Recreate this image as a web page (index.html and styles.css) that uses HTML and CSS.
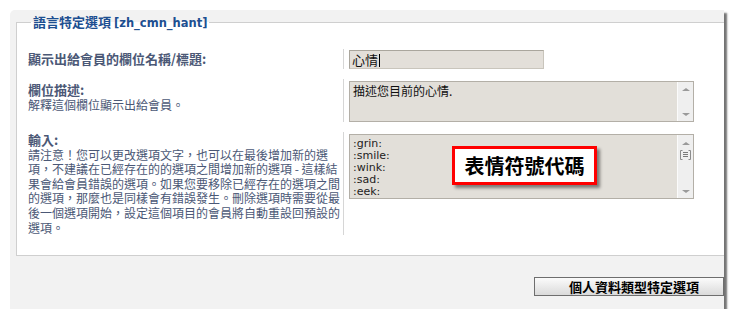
FILE: index.html
```html
<!DOCTYPE html>
<html lang="zh-Hant">
<head>
    <meta charset="UTF-8">
    <title>個人資料類型特定選項</title>
    <link rel="stylesheet" href="styles.css">
</head>
<body>
    <div class="panel">
        <fieldset class="lang-box">
            <legend>語言特定選項 <span class="lang-code">[zh_cmn_hant]</span></legend>

            <div class="row row-name">
                <div class="label-cell">
                    <div class="label-text"><b class="label-title">顯示出給會員的欄位名稱/標題:</b></div>
                </div>
                <div class="control-cell">
                    <div class="textfield">心情<span class="caret"></span></div>
                </div>
            </div>

            <div class="row row-desc">
                <div class="label-cell">
                    <div class="label-text"><b class="label-title">欄位描述:</b><br>解釋這個欄位顯示出給會員。</div>
                </div>
                <div class="control-cell">
                    <div class="textbox textbox-desc">
                        <div class="textbox-text">描述您目前的心情.</div>
                        <div class="scrollbar">
                            <span class="arrow arrow-up"></span>
                            <span class="arrow arrow-down"></span>
                        </div>
                    </div>
                </div>
            </div>

            <div class="row row-input">
                <div class="label-cell">
                    <div class="label-text"><b class="label-title">輸入:</b><br>請注意！您可以更改選項文字，也可以在最後增加新的選項，不建議在已經存在的的選項之間增加新的選項 - 這樣結果會給會員錯誤的選項。如果您要移除已經存在的選項之間的選項，那麼也是同樣會有錯誤發生。刪除選項時需要從最後一個選項開始，設定這個項目的會員將自動重設回預設的選項。</div>
                </div>
                <div class="control-cell">
                    <div class="textbox textbox-smilies">
                        <div class="textbox-text smilies">:grin:<br>:smile:<br>:wink:<br>:sad:<br>:eek:</div>
                        <div class="scrollbar">
                            <span class="arrow arrow-up"></span>
                            <svg class="thumb" width="11" height="10" viewBox="0 0 11 10">
                                <path d="M2.5 0.5 H0.5 V9.5 H2.5 M8.5 0.5 H10.5 V9.5 H8.5" fill="none" stroke="#8c8c8c"/>
                                <path d="M3 2.5 H8 M3 4.5 H8 M3 6.5 H8" stroke="#7a7a7a"/>
                            </svg>
                            <span class="arrow arrow-down"></span>
                        </div>
                        <div class="callout">表情符號代碼</div>
                    </div>
                </div>
            </div>
        </fieldset>

        <div class="footer">
            <button type="button" class="btn">個人資料類型特定選項</button>
        </div>
    </div>
</body>
</html>
```

FILE: styles.css
```css
body {
    margin: 0;
    background-color: #fff;
    font-family: "Noto Sans CJK TC", sans-serif;
}

.panel {
    margin: 10px 0 0 10px;
    width: 714px;
    height: 299px;
    padding: 4px 0 0 6px;
    box-sizing: border-box;
    background-color: #f2f2f2;
    border-radius: 5px 0 0 0;
    box-shadow: 3px 3px 2px rgba(0, 0, 0, 0.55);
}

.lang-box {
    margin: 0;
    padding: 18px 0 20px 11px;
    background-color: #fff;
    border: 1px solid #cfcfcf;
    border-right: none;
}

.lang-box legend {
    margin-left: 3px;
    padding: 0 2px;
    font-size: 13px;
    line-height: 15px;
    font-weight: bold;
    color: #1d4f91;
}

.lang-code {
    font-family: "DejaVu Sans", sans-serif;
    font-size: 11.5px;
}

.row {
    display: flex;
    margin-bottom: 10px;
}

.row:last-child {
    margin-bottom: 0;
}

.label-cell {
    width: 312px;
    padding-right: 3px;
    color: #4b5876;
}

.label-text {
    font-size: 12px;
    line-height: 14.6px;
}

.label-title {
    font-size: 13px;
    line-height: 14px;
}

.row-name .label-cell { padding-top: 3px; }
.row-desc .label-cell { padding-top: 4px; }
.row-input .label-cell { padding-top: 1px; }

.control-cell {
    flex: 1;
    border-left: 1px solid #d6d6d6;
    padding-left: 5px;
    padding-top: 2px;
}

.row-name .control-cell {
    padding-top: 1px;
}

.textfield {
    width: 191px;
    height: 17px;
    padding-left: 2px;
    border: 1px solid #c9c5bc;
    border-top-color: #aaa69d;
    border-left-color: #aaa69d;
    background-color: #e3dfd9;
    font-size: 13px;
    line-height: 17px;
    color: #111;
}

.caret {
    display: inline-block;
    width: 1px;
    height: 13px;
    margin-left: 1px;
    vertical-align: -2px;
    background-color: #000;
}

.textbox {
    position: relative;
    display: flex;
    width: 345px;
    box-sizing: border-box;
    border: 1px solid #b3afa7;
    background-color: #e2dfd9;
}

.textbox-desc {
    height: 41px;
}

.textbox-smilies {
    height: 65px;
}

.textbox-text {
    flex: 1;
    padding: 2px 3px;
    font-size: 12px;
    line-height: 14px;
    color: #111;
}

.smilies {
    padding-top: 3px;
    font-family: "DejaVu Sans", sans-serif;
    font-size: 11px;
    line-height: 12px;
    color: #222;
}

.scrollbar {
    width: 16px;
    display: flex;
    flex-direction: column;
    align-items: center;
    justify-content: space-between;
    padding: 6px 0 5px;
    box-sizing: border-box;
    background-color: #efefef;
    border-left: 1px solid #fbfbfb;
}

.arrow {
    width: 0;
    height: 0;
    border-left: 4px solid transparent;
    border-right: 4px solid transparent;
}

.arrow-up {
    border-bottom: 3px solid #9a9a9a;
}

.arrow-down {
    border-top: 3px solid #9a9a9a;
}

.textbox-smilies .scrollbar {
    justify-content: flex-start;
    padding-top: 7px;
}

.thumb {
    margin-top: 5px;
    margin-bottom: auto;
}

.callout {
    position: absolute;
    left: 102px;
    top: 11px;
    width: 139px;
    height: 33px;
    border: 3px solid #ff0000;
    background-color: #fff;
    box-shadow: 3px 3px 3px rgba(0, 0, 0, 0.45);
    font-size: 20px;
    line-height: 33px;
    font-weight: bold;
    text-align: center;
    color: #000;
}

.footer {
    display: flex;
    justify-content: flex-end;
    margin-top: 21px;
}

.btn {
    width: 190px;
    height: 19px;
    padding: 0;
    border: 1px solid #6e6e6e;
    background: linear-gradient(#fbfbfb, #dadada);
    font-family: "Noto Sans CJK TC", sans-serif;
    font-size: 13px;
    line-height: 17px;
    font-weight: bold;
    color: #000;
    padding-left: 10px;
}
```
